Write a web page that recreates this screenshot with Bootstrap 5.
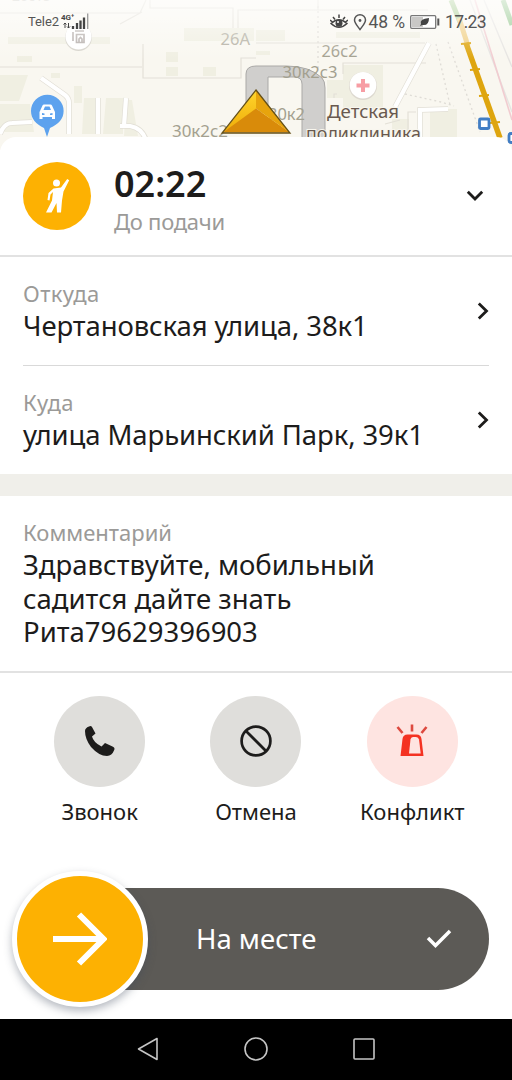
<!DOCTYPE html>
<html lang="ru">
<head>
<meta charset="utf-8">
<meta name="viewport" content="width=device-width, initial-scale=1">
<title>Заказ</title>
<link href="https://cdn.jsdelivr.net/npm/bootstrap@5.3.0/dist/css/bootstrap.min.css" rel="stylesheet">
<style>
body{font-family:"Noto Sans","Open Sans",sans-serif;color:#1d1c1b;background:#fff;overflow:hidden}
svg{display:block;flex:none}
.screen{width:512px;height:1080px}
.map-area{height:137px;background:#f8f6ee}
.map-area>svg{position:absolute;left:0;top:0}
.status{height:44px;padding:0 25px 0 28px;font-family:Roboto,sans-serif;color:#555;font-size:17.5px;line-height:20px}
.carrier{font-size:13px;letter-spacing:-.1px}
.sheet{background:#fff;border-radius:16px 16px 0 0;z-index:1}
.trip{height:120px;padding:0 28px 0 23px;border-bottom:2px solid #e2e2e2}
.who{width:68px;height:68px;background:#fdb102}
.trip-text{margin-left:23px;padding-top:2px}
.timer{font-size:36px;font-weight:600;line-height:47px}
.hint{font-size:22px;line-height:29px;color:#9b9a98}
.trip-text .hint{line-height:28px;letter-spacing:-.25px}
.point{height:108px;padding:22px 0 0;margin:0 23px}
.point .hint{letter-spacing:.4px}
.point+.point{border-top:1px solid #d9d9d9;height:109px}
.point svg{margin-top:23px}
.val{font-size:27.5px;line-height:35px;letter-spacing:-.1px;white-space:nowrap}
.gap-band{height:22px;background:#f0efea}
.note{height:177px;padding:22px 23px 0;border-bottom:2px solid #e2e2e2}
.note .val{line-height:33.5px;letter-spacing:0;padding-top:1px;white-space:normal}
.actions{height:203px;padding:22.5px 21.5px 0}
.act{font-size:22px;line-height:30px;gap:9.5px}
.disc{width:91px;height:91px;background:#dfdedb}
.disc.alarm{background:#fee4e1}
.slide-row{height:142px;padding:12px 23px 0 17px}
.slide-bar{height:102px;border-radius:51px;background:#5c5a56;color:#fff;font-size:27.5px;margin-left:50px;padding:0 37px 0 129px}
.knob{position:absolute;left:12px;top:-5px;width:136px;height:136px;border:5.5px solid #fff;background:#fdb102;box-shadow:0 4px 8px rgba(60,70,90,.38)}
.sysnav{height:61.5px;background:#000;gap:82px}
</style>
</head>
<body>
<div class="screen d-flex flex-column position-relative overflow-hidden">
  <div class="map-area position-relative flex-shrink-0">
    <svg width="512" height="150" viewBox="0 0 512 150" font-family="Noto Sans, sans-serif">
      <defs>
        <linearGradient id="fade" x1="0" y1="0" x2="0" y2="1"><stop offset="0" stop-color="#fff" stop-opacity=".7"/><stop offset="1" stop-color="#fff" stop-opacity="0"/></linearGradient>
        <linearGradient id="gold" x1="0" y1="0" x2="0" y2="1"><stop offset="0" stop-color="#ffd52c"/><stop offset="1" stop-color="#efad09"/></linearGradient>
      </defs>
      <rect width="512" height="150" fill="#f9f7f0"/>
      <g fill="#f0efe2">
        <path d="M8 37h102v7H8zM17 56h15v6H17zM184 28h70v13h-70zM166 52h12v10h-12zM166 67h12v9h-12zM203 67h13v9h-13zM51 73h9v5h-9zM0 75h28l-9 26H0zM0 104h30l4 28H0zM84 98h12v36H82zM106 98h17v36h-20zM126 100h6l6 36h-14zM74 86h8v17h-8zM336 32h84v6h-84zM256 30h29v11h-29zM256 51h14v4h-14zM327 80h26v18h-26zM343 65h40v45h-40zM430 109h27v28h-27zM392 119h17v13h-17z"/>
      </g>
      <g fill="none" stroke="#e3e0d7" stroke-width="1.200">
        <path d="M0 67h142M143 44V78h98V58h15M0 13h140l6-13M150 0v8h83v20M238 28V10h90M318 0v10h110M256 43h169M120 24l22-12"/>
        <path d="M343 74v-11h83M337 94h-3v4M400 120l-15 4M416 112h-8v28"/>
      </g>
      <g fill="none" stroke="#e2dfd6" stroke-width="5.600"><path id="roads" d="M41 78l24 17q4 3 4 8v31M98 98v36M126 98l-2 28M0 134q4-11 12-11l20-1M120 126h10q12 2 16 14M429 43l-34 64M448 109l-28 1v27"/></g>
      <use href="#roads" fill="none" stroke="#fff" stroke-width="4.200"/>
      <g fill="none" stroke="#dfdcd6" stroke-width="1.300" stroke-dasharray="2 3"><path d="M318 6V68M436 44l14 61M448 42l32 90M405 94l36 8 13 4"/></g>
      <path d="M484 0l28 67M470 0l42 112" fill="none" stroke="#e6e4e1" stroke-width="1.400"/>
      <path d="M475 0l37 120" fill="none" stroke="#f1ccd0" stroke-width="1.600"/>
      <path d="M451 0l9 22" stroke="#a3c98c" stroke-width="5"/>
      <path d="M459 18l9 28" stroke="#f0cf85" stroke-width="5"/>
      <path d="M466 43l34 95" stroke="#dea50e" stroke-width="5.400"/>
      <path d="M461 44l10-1M470 70l10-1M479 96l10-1M490 123l10-1" stroke="#dea50e" stroke-width="2"/>
      <path d="M503 0l9 25" stroke="#93c68c" stroke-width="5"/>
      <path d="M246 112V74q0-8 10-8h30q24 0 36 12 3 3 3 10v54h-23V84q0-7-8-7h-26v35z" fill="#d0cfcd" stroke="#aaa9a7"/>
      <g fill="#a3a08f" font-size="16">
        <text x="220.500" y="45" textLength="29.500" lengthAdjust="spacingAndGlyphs" fill="#b3afa2">26А</text>
        <text x="321.500" y="56.500" textLength="36" lengthAdjust="spacingAndGlyphs">26с2</text>
        <text x="282.500" y="78" textLength="55" lengthAdjust="spacingAndGlyphs">30к2с3</text>
        <text x="268" y="120" textLength="37" lengthAdjust="spacingAndGlyphs">30к2</text>
        <text x="172" y="137" textLength="56" lengthAdjust="spacingAndGlyphs">30к2с2</text>
        <text x="12" y="1" font-size="14" fill="#c9c6bd">26с15</text>
      </g>
      <g fill="#69594f" font-size="18" stroke="#f8f6ee" stroke-width="2" paint-order="stroke">
        <text x="327" y="117.500" textLength="72" lengthAdjust="spacingAndGlyphs">Детская</text>
        <text x="306" y="139.500" textLength="115" lengthAdjust="spacingAndGlyphs">поликлиника</text>
      </g>
      <circle cx="363" cy="86" r="14" fill="#ddd9d0"/><circle cx="363" cy="85.200" r="13.300" fill="#fff"/>
      <path d="M363 79v13M356.500 85.500h13" stroke="#f79da4" stroke-width="4"/>
      <circle cx="78.500" cy="37.500" r="13.500" fill="#d6d3cb"/><circle cx="78.500" cy="36.500" r="13" fill="#fff"/>
      <path d="M73 32v9M75 31h9M76.500 34.500h7.500v8h-7.500zM79 42v-3l1.500-1.500L82 39v3" fill="none" stroke="#b5aeab" stroke-width="1.700"/>
      <path d="M47 137l-3-9c-8-4-13-9-13-17a16.300 16.300 0 0 1 32.600 0c0 8-5 13-13.600 17z" fill="#5da2ee"/>
      <path d="M40 111l2.500-5.500q.5-1 1.500-1h6.500q1 0 1.500 1L54.500 111l.5 1v7h-3v-2h-9.500v2h-3v-7zm3.500-1h7.500l-1.500-3.500H45zm-1.500 3v2h2.500v-1.500zm10.500 0l-2.500.5v1.500h2.500z" fill="#fff" fill-rule="evenodd"/>
      <rect x="479.500" y="119" width="9.500" height="9.500" rx="1" fill="#fff" stroke="#417dc4" stroke-width="2.800"/>
      <rect x="509" y="133.500" width="9" height="9" rx="2" fill="#fff" stroke="#417dc4" stroke-width="2.800"/>
      <path d="M256 90L223 132.500q33-18 33-24z" fill="url(#gold)"/>
      <path d="M256 108.500l34 24h-67z" fill="#d98b0a"/>
      <path d="M256 90v18.500L289 132z" fill="#e7a40d"/>
      <path d="M256 90l34 43h-68z" fill="none" stroke="#655017" stroke-width="1.300"/>
      <rect width="512" height="60" fill="url(#fade)"/>
    </svg>
    <div class="status position-relative d-flex align-items-center">
      <span class="carrier">Tele2</span>
      <svg style="margin-left:2px" width="30" height="20" viewBox="0 0 30 20"><text x="0" y="7.500" font-size="8" font-weight="700" font-family="Roboto" fill="#444">4G⁺</text><path d="M4 11v5M2.500 12.500L4 11l1.500 1.500M7.500 11v5M6 14.500L7.500 16 9 14.500" stroke="#444" fill="none"/><path d="M12 14v3M16 11v6M19.500 8.500V17M23 5.500V17" stroke="#444" stroke-width="2.300"/><path d="M26.700 1.500V17" stroke="#999" stroke-width="1.300"/></svg>
      <svg class="ms-auto" width="18" height="16" viewBox="0 0 18 16"><path d="M1 9.500Q9 2 17 9.500 9 17 1 9.500zM3 3l2 2.500M9 .500v3.500M15 3l-2 2.500M0 6l2.500 2M18 6l-2.500 2" fill="none" stroke="#444" stroke-width="1.500"/><circle cx="9" cy="9.200" r="3.500" fill="#444"/><circle cx="8" cy="8" r="1" fill="#fff"/></svg>
      <svg style="margin-left:5px" width="14" height="17" viewBox="0 0 14 17"><path d="M7 15.500C4 11.500 1.500 9 1.500 6a5.500 5.200 0 0 1 11 0c0 3-2.500 5.500-5.500 9.500z" fill="none" stroke="#555" stroke-width="1.500"/><circle cx="7" cy="6.500" r="1.400" fill="#555"/></svg>
      <span style="margin-left:2px;letter-spacing:-.1px">48 %</span>
      <svg style="margin-left:5px" width="30" height="14" viewBox="0 0 30 14"><rect x=".7" y=".7" width="25" height="12.600" rx="1" fill="#fff" stroke="#777" stroke-width="1.300"/><path d="M2 2h11v10H2z" fill="#c9c8c6"/><path d="M10 11l1-2q-2-5 8-6 0 8-6.500 7z" fill="#444"/><path d="M28.300 3.500v7" stroke="#555" stroke-width="2"/></svg>
      <span style="margin-left:5px;width:42px;letter-spacing:-.5px">17:23</span>
    </div>
  </div>
  <main class="sheet position-relative d-flex flex-column">
    <header class="trip d-flex align-items-center">
      <div class="who rounded-circle d-flex align-items-center justify-content-center">
        <svg width="28" height="36" viewBox="0 0 28 36"><circle cx="13.500" cy="5" r="3.500" fill="#fff"/><path d="M18 9.500L24.200 1l2 1.300-5.700 11.200-1.500 9-1 12h-4l-.5-9.500-5 9.500H3l6-12 1-8.500-2.500 2.500-1 6-2-.5 1-7 5-4.500z" fill="#fff"/></svg>
      </div>
      <div class="trip-text"><div class="timer">02:22</div><div class="hint">До подачи</div></div>
      <svg class="ms-auto" width="18" height="12" viewBox="0 0 18 12"><path d="M1.800 1.800L9 9l7.200-7.200" fill="none" stroke="#1d1c1b" stroke-width="2.800"/></svg>
    </header>
    <section class="point d-flex"><div><div class="hint">Откуда</div><div class="val">Чертановская улица, 38к1</div></div>
      <svg class="ms-auto" width="12" height="18" viewBox="0 0 12 18"><path d="M1.800 1.500L9.500 9l-7.700 7.500" fill="none" stroke="#1d1c1b" stroke-width="2.800"/></svg></section>
    <section class="point d-flex"><div><div class="hint">Куда</div><div class="val">улица Марьинский Парк, 39к1</div></div>
      <svg class="ms-auto" width="12" height="18" viewBox="0 0 12 18"><path d="M1.800 1.500L9.500 9l-7.700 7.500" fill="none" stroke="#1d1c1b" stroke-width="2.800"/></svg></section>
    <div class="gap-band"></div>
    <section class="note"><div class="hint">Комментарий</div><div class="val">Здравствуйте, мобильный<br>садится дайте знать<br>Рита79629396903</div></section>
    <section class="actions row g-0">
      <div class="act col d-flex flex-column align-items-center"><div class="disc rounded-circle d-flex align-items-center justify-content-center">
        <svg width="32" height="32" viewBox="0 0 32 32"><path d="M1 6q0-3 4-4.500 2-1 3 .500l3.500 6.500-3.500 3q1.500 6 9.500 10l3.500-3.500 7.500 3.500q3 1 1.500 4-2 5-7 5.500Q15 31 7 22 1 14 1 6z" fill="#1d1c1b"/></svg></div><span>Звонок</span></div>
      <div class="act col d-flex flex-column align-items-center"><div class="disc rounded-circle d-flex align-items-center justify-content-center">
        <svg width="32" height="32" viewBox="0 0 32 32"><circle cx="16" cy="16" r="14.400" fill="none" stroke="#1d1c1b" stroke-width="2.700"/><path d="M6 6l20 20" stroke="#1d1c1b" stroke-width="2.700"/></svg></div><span>Отмена</span></div>
      <div class="act col d-flex flex-column align-items-center"><div class="disc alarm rounded-circle d-flex align-items-center justify-content-center">
        <svg width="32" height="34" viewBox="0 0 32 34"><path d="M16 .500v7M1.500 3l5 6M30.500 3l-5 6" stroke="#dd493f" stroke-width="2.600"/><path d="M4.500 32L6.500 15q.5-4.500 5-4.500h9q4.500 0 5 4.500l2 17z" fill="#f43222"/><path d="M13 29.500l1.500-14q.3-2.500 2.500-2.500h3q2.500 0 3 2.500l1.700 14z" fill="#fee4e1"/></svg></div><span>Конфликт</span></div>
    </section>
    <section class="slide-row position-relative">
      <div class="slide-bar d-flex align-items-center"><span>На месте</span>
        <svg class="ms-auto" width="26" height="20" viewBox="0 0 26 20"><path d="M2 9l7.500 7.500L24 2" fill="none" stroke="#fff" stroke-width="3.500"/></svg></div>
      <div class="knob rounded-circle d-flex align-items-center justify-content-center">
        <svg width="54" height="54" viewBox="0 0 54 54"><path d="M0 27h50M26 2.500L50.500 27 26 51.500" fill="none" stroke="#fff" stroke-width="6"/></svg></div>
    </section>
  </main>
  <nav class="sysnav d-flex align-items-center justify-content-center mt-auto flex-shrink-0 position-relative z-1">
    <svg width="26" height="26" viewBox="0 0 26 26"><path d="M22 2.500v21L3.500 13z" fill="none" stroke="#c5c5c5" stroke-width="1.600" stroke-linejoin="round"/></svg>
    <svg width="26" height="26" viewBox="0 0 26 26"><circle cx="13" cy="13" r="11" fill="none" stroke="#c5c5c5" stroke-width="1.600"/></svg>
    <svg width="26" height="26" viewBox="0 0 26 26"><rect x="3" y="3" width="20" height="20" rx="1" fill="none" stroke="#c5c5c5" stroke-width="1.600"/></svg>
  </nav>
</div>
<script src="https://cdn.jsdelivr.net/npm/bootstrap@5.3.0/dist/js/bootstrap.bundle.min.js"></script>
</body>
</html>
